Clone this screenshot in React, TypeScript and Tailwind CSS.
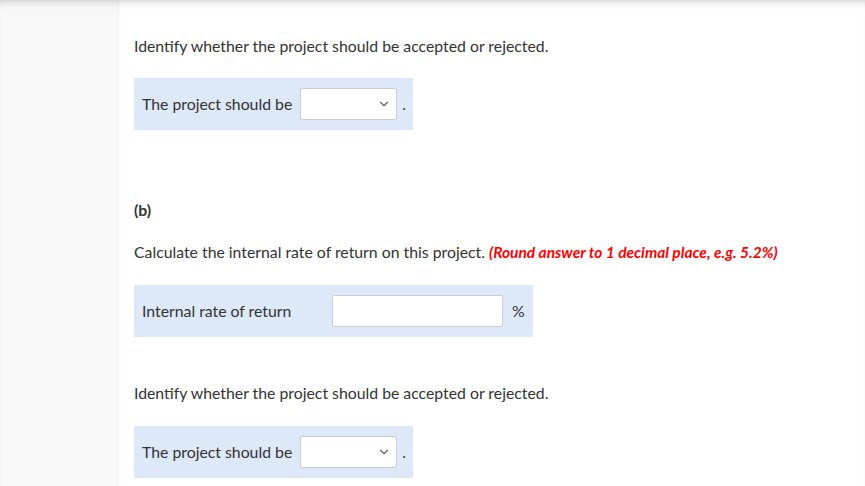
import { ChevronDown } from 'lucide-react'

function ChoiceBox() {
  return (
    <div className="flex w-[279px] items-center whitespace-nowrap bg-[#dde8f8] px-2 py-[10px]">
      <span>The project should be</span>
      <div className="ml-2 flex h-8 w-[97px] shrink-0 items-center justify-end rounded-[2px] border border-[#cccccc] bg-white pr-[5px]">
        <ChevronDown className="h-[14px] w-[14px] text-[#666]" strokeWidth={2} />
      </div>
      <span className="ml-[5px]">.</span>
    </div>
  )
}

export default function App() {
  const topShade = 'shadow-[inset_0_7px_8px_-6px_rgba(0,0,0,0.22)]'

  return (
    <div
      className="flex min-h-[486px] text-[15.8px] leading-[22px] text-[#333]"
      style={{ fontFamily: 'Lato, "Open Sans", sans-serif' }}
    >
      {/* Left rail */}
      <div className={`w-[119px] shrink-0 bg-[#f8f8f8] ${topShade}`} />

      {/* Question content */}
      <div className={`flex-1 bg-white pl-[15px] pt-[35px] ${topShade}`}>
        <p>Identify whether the project should be accepted or rejected.</p>

        <div className="mt-[21px]">
          <ChoiceBox />
        </div>

        <p className="mt-[69px] font-bold">(b)</p>

        <p className="mt-[20px] whitespace-nowrap">
          Calculate the internal rate of return on this project.{' '}
          <span className="text-[15.5px] font-bold italic text-[#ff0000]">
            (Round answer to 1 decimal place, e.g. 5.2%)
          </span>
        </p>

        <div className="mt-[22px]">
          <div className="flex w-[399px] items-center whitespace-nowrap bg-[#dde8f8] py-[10px] pl-2">
            <span className="w-[190px]">Internal rate of return</span>
            <div className="h-8 w-[171px] rounded-[2px] border border-[#cccccc] bg-white" />
            <span className="ml-[9px]">%</span>
          </div>
        </div>

        <p className="mt-[45px]">Identify whether the project should be accepted or rejected.</p>

        <div className="mt-[22px]">
          <ChoiceBox />
        </div>
      </div>
    </div>
  )
}
